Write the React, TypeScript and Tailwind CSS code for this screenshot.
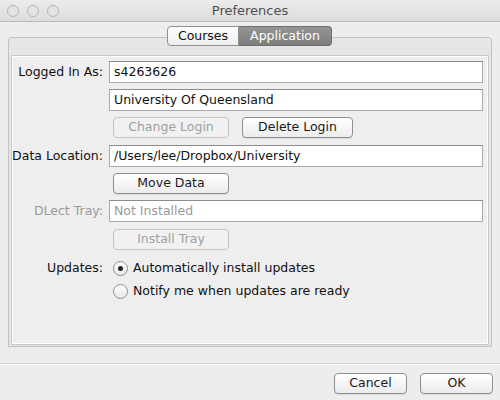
import { useState } from "react";

type BtnProps = {
    label: string;
    disabled?: boolean;
    className?: string;
}

function MacButton({ label, disabled, className }: BtnProps) {
    return (
        <button
            disabled={disabled}
            className={`h-[21px] rounded-[4px] border text-[12.5px] leading-none flex items-center justify-center ${
                disabled
                    ? "border-[#c4c4c4] bg-[#f1f1f1] text-[#a0a0a0]"
                    : "border-[#8f8f8f] bg-gradient-to-b from-[#ffffff] to-[#ececec] text-[#1a1a1a] shadow-[0_1px_0_rgba(0,0,0,0.08)]"
            } ${className ?? ""}`}
        >
            {label}
        </button>
    );
}

function Field({ value, disabled }: { value: string; disabled?: boolean }) {
    return (
        <div className={`h-[22px] border border-[#a9a9a9] border-t-[#8c8c8c] bg-white px-[4px] flex items-center text-[12.5px] ${disabled ? "text-[#9a9a9a]" : "text-[#111]"}`}>
            {value}
        </div>
    );
}

function Radio({ checked, label, onClick }: { checked: boolean; label: string; onClick: () => void }) {
    return (
        <div className="flex items-center gap-[5px] h-[20px] cursor-default" onClick={onClick}>
            <div className="w-[15px] h-[15px] rounded-full border border-[#8e8e8e] bg-gradient-to-b from-[#ffffff] to-[#e8e8e8] flex items-center justify-center">
                {checked && <div className="w-[5px] h-[5px] rounded-full bg-[#222]" />}
            </div>
            <span className="text-[12.5px] text-[#111]">{label}</span>
        </div>
    );
}

export default function App() {
    const [auto, setAuto] = useState(true);

    return (
        <div className="w-[500px] h-[400px] bg-[#ededed] flex flex-col overflow-hidden" style={{ fontFamily: '"DejaVu Sans", sans-serif' }}>
            {/* title bar */}
            <div className="h-[22px] relative flex items-center justify-center bg-gradient-to-b from-[#ececec] to-[#dcdcdc] border-b border-[#b9b9b9]">
                <div className="absolute left-[7px] top-[5px] flex gap-[8px]">
                    <div className="w-[12px] h-[12px] rounded-full border border-[#b3b3b3] bg-[#e4e4e4]" />
                    <div className="w-[12px] h-[12px] rounded-full border border-[#b3b3b3] bg-[#e4e4e4]" />
                    <div className="w-[12px] h-[12px] rounded-full border border-[#b3b3b3] bg-[#e4e4e4]" />
                </div>
                <span className="text-[13px] text-[#4f4f4f]">Preferences</span>
            </div>

            {/* tabs */}
            <div className="relative z-10 mt-[4px] flex justify-center">
                <div className="flex h-[20px] text-[12.5px] -ml-[1px]">
                    <div className="w-[72px] rounded-l-[4px] border border-[#8f8f8f] bg-gradient-to-b from-[#ffffff] to-[#eeeeee] flex items-center justify-center text-[#111]">Courses</div>
                    <div className="w-[93px] rounded-r-[4px] border border-l-0 border-[#6f6f6f] bg-gradient-to-b from-[#959595] to-[#7d7d7d] flex items-center justify-center text-white">Application</div>
                </div>
            </div>

            {/* tab panel */}
            <div className="mx-[8px] -mt-[9px] h-[310px] rounded-t-[4px] border border-[#c2c2c2] bg-[#e6e6e6] flex flex-col">
                <div className="h-[17px] shrink-0" />
                <div className="flex-1 mx-[2px] mb-[1px] border border-[#c9c9c9] shadow-[inset_0_0_0_1px_#ffffff] bg-[#eeeeee] pt-[5px] pl-0 pr-[5px]">
                    <div className="grid grid-cols-[91px_1fr] gap-x-[6px] items-center text-[12.5px] whitespace-nowrap">
                        <span className="text-right text-[#111] h-[22px] leading-[22px]">Logged In As:</span>
                        <Field value="s4263626" />

                        <span className="mt-[6px]" />
                        <div className="mt-[6px]"><Field value="University Of Queensland" /></div>

                        <span className="mt-[6px]" />
                        <div className="mt-[6px] flex gap-[13px] pl-[4px]">
                            <MacButton label="Change Login" disabled className="w-[116px]" />
                            <MacButton label="Delete Login" className="w-[111px]" />
                        </div>

                        <span className="mt-[7px] flex justify-end text-[#111] h-[22px] leading-[22px]">Data Location:</span>
                        <div className="mt-[7px]"><Field value="/Users/lee/Dropbox/University" /></div>

                        <span className="mt-[6px]" />
                        <div className="mt-[6px] pl-[4px]">
                            <MacButton label="Move Data" className="w-[116px]" />
                        </div>

                        <span className="mt-[6px] text-right text-[#9a9a9a] h-[22px] leading-[22px]">DLect Tray:</span>
                        <div className="mt-[6px]"><Field value="Not Installed" disabled /></div>

                        <span className="mt-[7px]" />
                        <div className="mt-[7px] pl-[4px]">
                            <MacButton label="Install Tray" disabled className="w-[116px]" />
                        </div>

                        <span className="mt-[8px] self-start text-right text-[#111] h-[20px] leading-[20px]">Updates:</span>
                        <div className="mt-[8px] flex flex-col gap-[3px] pl-[4px]">
                            <Radio checked={auto} label="Automatically install updates" onClick={() => setAuto(true)} />
                            <Radio checked={!auto} label="Notify me when updates are ready" onClick={() => setAuto(false)} />
                        </div>
                    </div>
                </div>
            </div>

            {/* bottom bar */}
            <div className="mt-[16px] border-t border-[#d3d3d3] shadow-[inset_0_1px_0_#fafafa] flex-1 flex justify-end items-start pt-[9px] pr-[7px] gap-[13px]">
                <MacButton label="Cancel" className="w-[73px]" />
                <MacButton label="OK" className="w-[73px]" />
            </div>
        </div>
    );
}
